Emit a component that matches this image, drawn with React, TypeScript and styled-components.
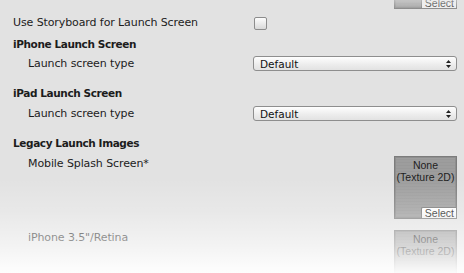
import React from "react";
import styled, { createGlobalStyle } from "styled-components";

const Global = createGlobalStyle`
  html, body { margin: 0; padding: 0; background: #e2e2e2; }
  body { font-family: "DejaVu Sans", "Liberation Sans", sans-serif; }
`;

const Page = styled.div`
  position: relative;
  width: 464px;
  height: 273px;
  overflow: hidden;
  background: #e2e2e2;
  color: #1c1c1c;
  font-size: 11px;
  display: flex;
  flex-direction: column;
  padding: 0 7px 0 13px;
  box-sizing: border-box;
`;

const Row = styled.div<{ $mt: number; $h: number; $top?: boolean }>`
  display: flex;
  align-items: ${(p) => (p.$top ? "flex-start" : "center")};
  margin-top: ${(p) => p.$mt}px;
  height: ${(p) => p.$h}px;
  flex-shrink: 0;
`;

const Label = styled.div<{ $indent?: boolean; $bold?: boolean }>`
  width: 240px;
  flex-shrink: 0;
  box-sizing: border-box;
  padding-left: ${(p) => (p.$indent ? 15 : 0)}px;
  font-weight: ${(p) => (p.$bold ? "bold" : "normal")};
  font-size: ${(p) => (p.$bold ? 10.5 : 11)}px;
  letter-spacing: ${(p) => (p.$bold ? -0.4 : -0.1)}px;
  line-height: 16px;
  white-space: nowrap;
`;

const Control = styled.div<{ $right?: boolean }>`
  flex: 1;
  display: flex;
  justify-content: ${(p) => (p.$right ? "flex-end" : "flex-start")};
  align-items: center;
`;

const Checkbox = styled.div`
  width: 11px;
  height: 11px;
  margin-left: 1px;
  border: 1px solid #8c8c8c;
  border-radius: 2px;
  background: linear-gradient(#fdfdfd, #d8d8d8);
`;

const Dropdown = styled.div`
  width: 204px;
  height: 15px;
  box-sizing: border-box;
  border: 1px solid #8e8e8e;
  border-radius: 3px;
  background: linear-gradient(#fefefe, #ececec 60%, #e2e2e2);
  display: flex;
  align-items: center;
  justify-content: space-between;
  padding: 0 5px 0 6px;
  font-size: 10.5px;
  color: #111;
`;

const Texture = styled.div`
  position: relative;
  width: 63px;
  height: 63px;
  box-sizing: border-box;
  border: 1px solid #7c7c7c;
  box-shadow: inset 0 0 0 1px #8e8e8e;
  background: repeating-linear-gradient(#9d9d9d 0 2px, #999 2px 3px);
  display: flex;
  flex-direction: column;
  align-items: center;
  padding-top: 2px;
  font-family: "Liberation Sans", Arial, sans-serif;
  font-size: 10.5px;
  line-height: 12px;
  white-space: nowrap;
  color: #1e1e1e;
`;

const SelectBtn = styled.div`
  position: absolute;
  right: 0;
  bottom: 0;
  width: 35px;
  height: 11px;
  box-sizing: border-box;
  background: linear-gradient(#ffffff, #f0f0f0);
  border-top: 1px solid #777;
  border-left: 1px solid #777;
  border-top-left-radius: 2px;
  font-size: 10.5px;
  line-height: 10px;
  text-align: right;
  padding-right: 2px;
  color: #1e1e1e;
`;

const TopFade = styled.div`
  position: absolute;
  left: 0;
  top: 0;
  width: 100%;
  height: 12px;
  background: linear-gradient(rgba(226, 226, 226, 0.6), rgba(226, 226, 226, 0));
  pointer-events: none;
`;

const BottomFade = styled.div`
  position: absolute;
  left: 0;
  top: 178px;
  width: 100%;
  height: 95px;
  background: linear-gradient(
    rgba(255, 255, 255, 0),
    rgba(255, 255, 255, 0.22) 35%,
    rgba(255, 255, 255, 0.6) 72%,
    rgba(255, 255, 255, 0.96)
  );
  pointer-events: none;
`;

const Arrows = () => (
  <svg width="5" height="8" viewBox="0 0 5 8">
    <path d="M2.5 0 L5 3 H0 Z M2.5 8 L5 5 H0 Z" fill="#222" />
  </svg>
);

const TextureField = () => (
  <Texture>
    <div>None</div>
    <div>(Texture 2D)</div>
    <SelectBtn>Select</SelectBtn>
  </Texture>
);

export default function App() {
  return (
    <>
      <Global />
      <Page>
        <Row $mt={-54} $h={63}>
          <Label />
          <Control $right>
            <TextureField />
          </Control>
        </Row>
        <Row $mt={6} $h={16}>
          <Label>Use Storyboard for Launch Screen</Label>
          <Control>
            <Checkbox />
          </Control>
        </Row>
        <Row $mt={5} $h={16}>
          <Label $bold>iPhone Launch Screen</Label>
        </Row>
        <Row $mt={4} $h={15}>
          <Label $indent>Launch screen type</Label>
          <Control>
            <Dropdown>
              <span>Default</span>
              <Arrows />
            </Dropdown>
          </Control>
        </Row>
        <Row $mt={14} $h={16}>
          <Label $bold>iPad Launch Screen</Label>
        </Row>
        <Row $mt={5} $h={15}>
          <Label $indent>Launch screen type</Label>
          <Control>
            <Dropdown>
              <span>Default</span>
              <Arrows />
            </Dropdown>
          </Control>
        </Row>
        <Row $mt={14} $h={16}>
          <Label $bold>Legacy Launch Images</Label>
        </Row>
        <Row $mt={5} $h={63} $top>
          <Label $indent>Mobile Splash Screen*</Label>
          <Control $right>
            <TextureField />
          </Control>
        </Row>
        <Row $mt={11} $h={63} $top>
          <Label $indent>iPhone 3.5"/Retina</Label>
          <Control $right>
            <TextureField />
          </Control>
        </Row>
        <TopFade />
        <BottomFade />
      </Page>
    </>
  );
}
